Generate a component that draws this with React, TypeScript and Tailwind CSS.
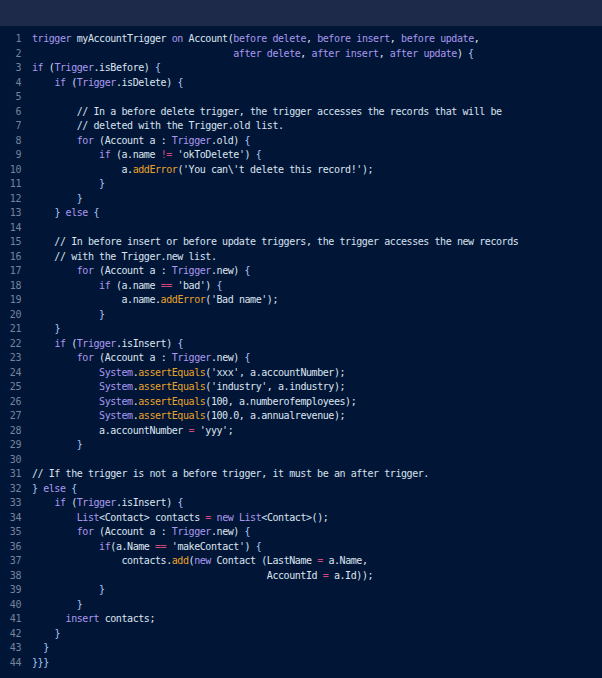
import React from "react";

const LINES: string[] = [
  "trigger myAccountTrigger on Account(before delete, before insert, before update,",
  "                                    after delete, after insert, after update) {",
  "if (Trigger.isBefore) {",
  "    if (Trigger.isDelete) {",
  "",
  "        // In a before delete trigger, the trigger accesses the records that will be",
  "        // deleted with the Trigger.old list.",
  "        for (Account a : Trigger.old) {",
  "            if (a.name != 'okToDelete') {",
  "                a.addError('You can\\'t delete this record!');",
  "            }",
  "        }",
  "    } else {",
  "",
  "    // In before insert or before update triggers, the trigger accesses the new records",
  "    // with the Trigger.new list.",
  "        for (Account a : Trigger.new) {",
  "            if (a.name == 'bad') {",
  "                a.name.addError('Bad name');",
  "            }",
  "    }",
  "    if (Trigger.isInsert) {",
  "        for (Account a : Trigger.new) {",
  "            System.assertEquals('xxx', a.accountNumber);",
  "            System.assertEquals('industry', a.industry);",
  "            System.assertEquals(100, a.numberofemployees);",
  "            System.assertEquals(100.0, a.annualrevenue);",
  "            a.accountNumber = 'yyy';",
  "        }",
  "",
  "// If the trigger is not a before trigger, it must be an after trigger.",
  "} else {",
  "    if (Trigger.isInsert) {",
  "        List<Contact> contacts = new List<Contact>();",
  "        for (Account a : Trigger.new) {",
  "            if(a.Name == 'makeContact') {",
  "                contacts.add(new Contact (LastName = a.Name,",
  "                                          AccountId = a.Id));",
  "            }",
  "        }",
  "      insert contacts;",
  "    }",
  "  }",
  "}}}",
];

const KEYWORDS = new Set([
  "trigger",
  "on",
  "before",
  "after",
  "delete",
  "insert",
  "update",
  "if",
  "else",
  "for",
  "new",
  "List",
  "System",
  "Trigger",
]);
const METHODS = new Set(["addError", "assertEquals", "add"]);

function renderLine(line: string, idx: number) {
  const trimmed = line.trimStart();
  if (trimmed.startsWith("//")) {
    return <span className="text-[#d9e1ef]">{line}</span>;
  }
  const parts: React.ReactNode[] = [];
  const re = /(\s+|[A-Za-z_][A-Za-z0-9_]*|'(?:\\.|[^'])*'|!=|==|=|[{}]|[^\sA-Za-z_'{}=!]+|.)/g;
  let m: RegExpExecArray | null;
  let k = 0;
  let prevDot = false;
  while ((m = re.exec(line)) !== null) {
    const t = m[0];
    let cls = "text-[#dde4f0]";
    if (/^[A-Za-z_]/.test(t)) {
      if (METHODS.has(t) && prevDot) cls = "text-[#e8a22a]";
      else if (KEYWORDS.has(t) && !prevDot) cls = "text-[#ab98ee]";
    } else if (t === "!=" || t === "==" || t === "=") {
      cls = "text-[#d2497c]";
    } else if (t === "{" || t === "}") {
      cls = "text-[#a9c6f6]";
    }
    parts.push(
      <span key={`${idx}-${k++}`} className={cls}>
        {t}
      </span>
    );
    if (!/^\s+$/.test(t)) prevDot = t.endsWith(".");
  }
  return parts;
}

export default function App() {
  return (
    <div className="w-[602px] h-[678px] bg-[#011637] overflow-hidden">
      <div className="h-[26px] bg-[#1e2a4a]" />
      <div
        className="pt-[6px] text-[10px] leading-[14.5px] tracking-[-0.43px]"
        style={{ fontFamily: '"DejaVu Sans Mono", "Liberation Mono", monospace' }}
      >
        {LINES.map((line, i) => (
          <div key={i} className="flex h-[14.5px] whitespace-pre">
            <span className="w-[21px] shrink-0 text-right text-[#76839d]">{i + 1}</span>
            <span className="ml-[11px]">{renderLine(line, i)}</span>
          </div>
        ))}
      </div>
    </div>
  );
}
